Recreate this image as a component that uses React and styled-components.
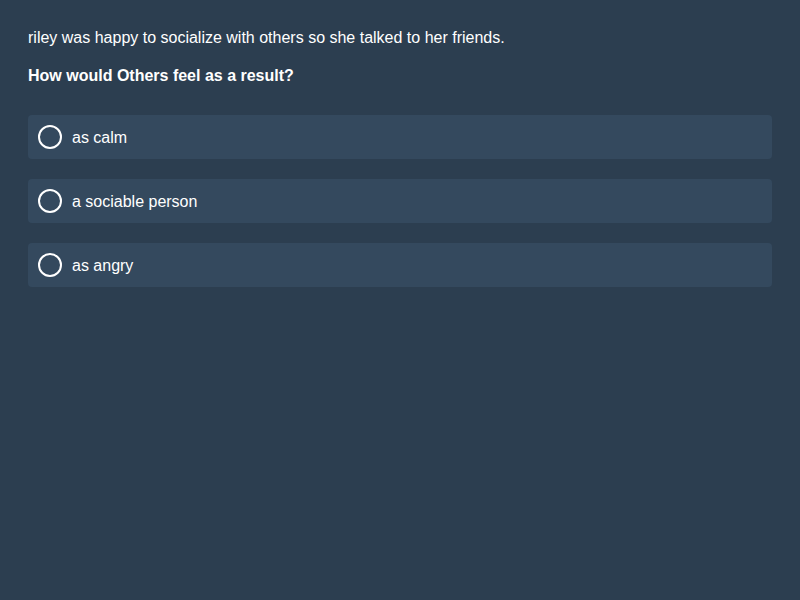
import React from "react";
import styled, { createGlobalStyle } from "styled-components";

const Global = createGlobalStyle`
  html, body { margin: 0; padding: 0; background: #2c3e50; }
  body { font-family: "Liberation Sans", Arial, sans-serif; color: #ffffff; }
`;

const Page = styled.div`
  padding: 29px 28px 28px;
  min-height: 600px;
  box-sizing: border-box;
  background: #2c3e50;
`;

const Context = styled.p`
  margin: 0 0 20px;
  font-size: 16px;
  line-height: 18px;
`;

const Question = styled.p`
  margin: 0 0 30px;
  font-size: 16px;
  line-height: 18px;
  font-weight: bold;
`;

const Options = styled.div`
  display: flex;
  flex-direction: column;
  gap: 20px;
`;

const Option = styled.label`
  display: flex;
  align-items: center;
  gap: 10px;
  height: 44px;
  padding: 0 10px;
  background: #34495e;
  border-radius: 4px;
  font-size: 16px;
  cursor: pointer;
`;

const OptionText = styled.span`
  padding-top: 2px;
  line-height: 18px;
`;

const Radio = styled.span`
  width: 24px;
  height: 24px;
  box-sizing: border-box;
  border: 2px solid #ffffff;
  border-radius: 50%;
  flex: none;
`;

const options = ["as calm", "a sociable person", "as angry"];

export default function App() {
  return (
    <>
      <Global />
      <Page>
        <Context>riley was happy to socialize with others so she talked to her friends.</Context>
        <Question>How would Others feel as a result?</Question>
        <Options>
          {options.map((o) => (
            <Option key={o}>
              <Radio />
              <OptionText>{o}</OptionText>
            </Option>
          ))}
        </Options>
      </Page>
    </>
  );
}
